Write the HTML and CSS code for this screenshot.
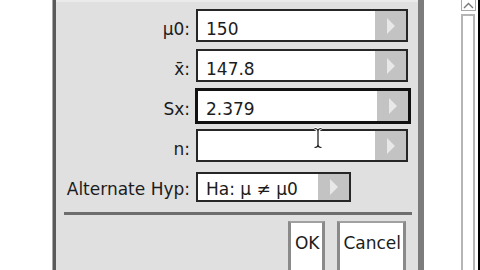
FILE: index.html
```html
<!DOCTYPE html>
<html>
<head>
<meta charset="utf-8">
<link rel="stylesheet" href="styles.css">
</head>
<body>
<div class="screen">
  <div class="side"></div>
  <div class="dialog">
    <div class="titlebar"><span class="title">z Test</span></div>
    <div class="body">
      <div class="form">
        <div class="label">µ0:</div>
        <div class="field"><div class="val">150</div><div class="arrow"><svg width="10" height="16" viewBox="0 0 10 16"><path d="M1 0 L9 8 L1 16 Z" fill="#e8e8e8"/></svg></div></div>
        <div class="label">x̄:</div>
        <div class="field"><div class="val">147.8</div><div class="arrow"><svg width="10" height="16" viewBox="0 0 10 16"><path d="M1 0 L9 8 L1 16 Z" fill="#e8e8e8"/></svg></div></div>
        <div class="label">Sx:</div>
        <div class="field focus"><div class="val">2.379</div><div class="arrow"><svg width="10" height="16" viewBox="0 0 10 16"><path d="M1 0 L9 8 L1 16 Z" fill="#e8e8e8"/></svg></div></div>
        <div class="label">n:</div>
        <div class="field"><div class="val"></div><div class="arrow"><svg width="10" height="16" viewBox="0 0 10 16"><path d="M1 0 L9 8 L1 16 Z" fill="#e8e8e8"/></svg></div></div>
        <div class="label alt">Alternate Hyp:</div>
        <div class="altcell"><div class="field small"><div class="val">Ha: µ ≠ µ0</div><div class="arrow"><svg width="10" height="16" viewBox="0 0 10 16"><path d="M1 0 L9 8 L1 16 Z" fill="#e8e8e8"/></svg></div></div></div>
      </div>
      <div class="sep"></div>
      <div class="buttons">
        <div class="btn ok">OK</div>
        <div class="btn">Cancel</div>
      </div>
    </div>
  </div>
  <div class="gap"></div>
  <div class="scroll">
    <div class="sbtn"><svg width="13" height="8" viewBox="0 0 13 8"><path d="M2 7 L6.5 2.5 L11 7" fill="none" stroke="#777" stroke-width="1.4"/></svg></div>
    <div class="track"></div>
  </div>
  <div class="edge"></div>
</div>
<svg class="cursor" width="12" height="22" viewBox="0 0 12 22">
  <path d="M2.5 1.5 Q6 1.5 6 4.5 Q6 1.5 9.5 1.5 M6 4.5 V17.5 M2.5 20.5 Q6 20.5 6 17.5 Q6 20.5 9.5 20.5" fill="none" stroke="#fff" stroke-width="3"/>
  <path d="M2.5 1.5 Q6 1.5 6 4.5 Q6 1.5 9.5 1.5 M6 4.5 V17.5 M2.5 20.5 Q6 20.5 6 17.5 Q6 20.5 9.5 20.5" fill="none" stroke="#111" stroke-width="1.2"/>
</svg>
</body>
</html>
```

FILE: styles.css
```css
html, body {
  margin: 0;
  padding: 0;
}
body {
  width: 480px;
  height: 270px;
  overflow: hidden;
  background: #fff;
  font-family: "DejaVu Sans", Verdana, sans-serif;
  font-size: 17px;
  color: #1c1c1c;
  position: relative;
}
.screen {
  display: flex;
  height: 270px;
}
.side {
  width: 52px;
  background: #fff;
  border-right: 1px solid #a8a8a8;
}
.dialog {
  width: 362px;
  border-left: 3px solid #5a5a5a;
  border-right: 6px solid #7c7c7c;
  background: #e0e0e0;
  display: flex;
  flex-direction: column;
}
.titlebar {
  height: 11px;
  background: #474747;
  border-bottom: 2px solid #ebebeb;
  overflow: hidden;
  padding-left: 6px;
}
.title {
  display: block;
  line-height: 20px;
  margin-top: -14px;
  color: #d8d8d8;
}
.body {
  padding: 7px 6px 0 8px;
  flex: 1;
}
.form {
  display: grid;
  grid-template-columns: 126px 212px;
  grid-auto-rows: 33px;
  column-gap: 6px;
  row-gap: 7px;
}
.label {
  text-align: right;
  line-height: 20px;
  padding-top: 10px;
  white-space: nowrap;
}
.label.alt {
  margin-top: 3px;
  padding-top: 7px;
}
.altcell {
  margin-top: 3px;
  display: flex;
}
.field {
  display: flex;
  background: #fff;
  border: 2px solid #262626;
  box-sizing: border-box;
}
.field.small {
  width: 155px;
}
.field.small .val {
  padding-top: 5px;
}
.field.focus {
  border: 3px solid #111;
  margin: -1px -3px -2px -1px;
}
.field.focus .val {
  padding-top: 8px;
}
.val {
  flex: 1;
  line-height: 20px;
  padding-top: 8px;
  padding-left: 8px;
  white-space: nowrap;
}
.arrow {
  width: 31px;
  background: #c3c3c3;
  display: flex;
  align-items: center;
  justify-content: center;
}
.sep {
  margin-top: 10px;
  height: 3px;
  background: #6e6e6e;
}
.buttons {
  margin-top: 6px;
  display: flex;
  justify-content: flex-end;
  gap: 12px;
  padding-right: 6px;
}
.btn {
  background: #fff;
  border-left: 3px solid #8a8a8a;
  border-right: 3px solid #8a8a8a;
  border-top: 2px solid #a0a0a0;
  line-height: 20px;
  padding: 10px 2px 20px 3px;
}
.btn.ok {
  padding-left: 4px;
  padding-right: 3px;
}
.gap {
  width: 37px;
}
.scroll {
  width: 15px;
  display: flex;
  flex-direction: column;
}
.sbtn {
  height: 10px;
  border: 1px solid #a8a8a8;
  border-top: none;
  display: flex;
  align-items: center;
  justify-content: center;
}
.track {
  margin-top: 3px;
  flex: 1;
  border: 2px solid #b5b5b5;
  border-bottom: none;
  margin-right: 1px;
}
.edge {
  width: 2px;
  border-left: 2px solid #fff;
  background: #000;
}
.cursor {
  position: absolute;
  left: 312px;
  top: 127px;
}
```
